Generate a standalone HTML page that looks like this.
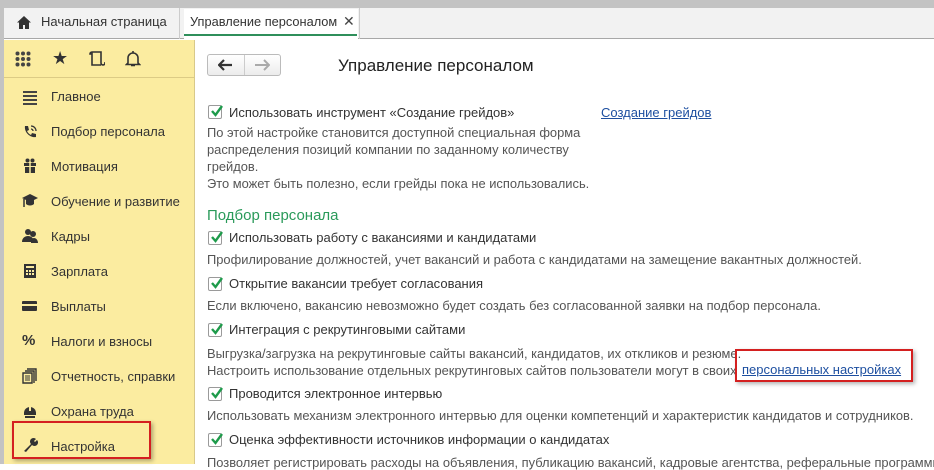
<!DOCTYPE html>
<html><head><meta charset="utf-8"><style>
*{margin:0;padding:0;box-sizing:border-box}
body{width:934px;height:464px;overflow:hidden;background:#fff;font-family:"Liberation Sans",Arial,sans-serif;font-size:13px;color:#333;position:relative}
.a{position:absolute;white-space:nowrap}
.top{left:0;top:0;width:934px;height:8px;background:#c3c3c3}
.tabs{left:0;top:8px;width:934px;height:31px;background:#f2f2f2;border-bottom:1px solid #a8a8a8}
.side{left:4px;top:40px;width:191px;height:424px;background:#fbeca0;border-right:1px solid #d8c98a}
.lb{left:0;top:8px;width:4px;height:456px;background:#c3c3c3}
.mi{left:51px;font-size:13px;color:#333}
.ic{left:22px;width:16px;height:16px}
.cb{width:14px;height:14px;border:1px solid #9a9a9a;background:#fff;border-radius:2px}
.cb svg{position:absolute;left:1px;top:-2px}
.t{left:229px;color:#333}
.d{left:207px;color:#555;font-size:12.9px}
</style></head><body>
<div class="a top"></div>
<div class="a tabs"></div>
<div class="a lb"></div>
<svg class="a" style="left:17px;top:16px" width="14" height="13" viewBox="0 0 14 13"><path d="M7 0L0 6.5h2V13h4V9h2v4h4V6.5h2z" fill="#333"/></svg>
<div class="a" style="left:41px;top:14px;color:#333">Начальная страница</div>
<div class="a" style="left:179px;top:8px;width:1px;height:31px;background:#ccc"></div>
<div class="a" style="left:184px;top:9px;width:174px;height:30px;background:#fff"></div>
<div class="a" style="left:190px;top:14px;color:#333;font-size:12.8px">Управление персоналом</div>
<div class="a" style="left:343px;top:13px;font-size:14px;color:#444">✕</div>
<div class="a" style="left:184px;top:34px;width:173px;height:2px;background:#2f8f5b"></div>
<div class="a" style="left:359px;top:8px;width:1px;height:31px;background:#ccc"></div>
<div class="a side"></div>
<svg class="a" style="left:15px;top:51px" width="16" height="16"><g fill="#444"><circle cx="2.5" cy="2.5" r="2"/><circle cx="8" cy="2.5" r="2"/><circle cx="13.5" cy="2.5" r="2"/><circle cx="2.5" cy="8" r="2"/><circle cx="8" cy="8" r="2"/><circle cx="13.5" cy="8" r="2"/><circle cx="2.5" cy="13.5" r="2"/><circle cx="8" cy="13.5" r="2"/><circle cx="13.5" cy="13.5" r="2"/></g></svg>
<div class="a" style="left:52px;top:48px;font-size:18px;color:#333">★</div>
<svg class="a" style="left:89px;top:50px" width="16" height="17"><path d="M3 2h9v11a2 2 0 0 0 4 0v-1M3 2a2 2 0 0 0-2 2h2M3 2v13h9" fill="none" stroke="#333" stroke-width="1.6"/></svg>
<svg class="a" style="left:125px;top:50px" width="16" height="17"><path d="M8 1v2M3 13V8a5 5 0 0 1 10 0v5l1.5 1.5h-13zM6 15.5h4" fill="none" stroke="#333" stroke-width="1.6"/></svg>
<div class="a" style="left:4px;top:77px;width:190px;height:1px;background:#dccb85"></div>
<svg class="a ic" style="top:90px"><path d="M1 2h14M1 6h14M1 10h14M1 14h14" stroke="#444" stroke-width="2"/></svg>
<div class="a mi" style="top:89px">Главное</div>
<svg class="a ic" style="top:124px"><path d="M3 2l3 0 1 4-2 1c1 2 2 3 4 4l1-2 4 1v3c-6 1-12-5-11-11z" fill="#333"/><path d="M9 2a5 5 0 0 1 5 5M9 5a2 2 0 0 1 2 2" stroke="#333" stroke-width="1.3" fill="none"/></svg>
<div class="a mi" style="top:124px">Подбор персонала</div>
<svg class="a ic" style="top:158px"><path d="M2 5h12v3H2zM3 9h10v6H3z" fill="#333"/><path d="M8 4V15" stroke="#fbeca0" stroke-width="1.5"/><circle cx="5.5" cy="2.5" r="2" fill="#333"/><circle cx="10.5" cy="2.5" r="2" fill="#333"/></svg>
<div class="a mi" style="top:159px">Мотивация</div>
<svg class="a ic" style="top:193px"><path d="M0 5l8-4 8 4-8 4z M4 7v4c2 2 6 2 8 0V7L8 9z" fill="#333"/><path d="M2 6v8" stroke="#333" stroke-width="1.5"/></svg>
<div class="a mi" style="top:194px">Обучение и развитие</div>
<svg class="a ic" style="top:228px"><circle cx="6" cy="4" r="3" fill="#333"/><circle cx="11" cy="6" r="3" fill="#333"/><path d="M0 14c0-4 3-6 6-6s6 2 6 6zM9 15c0-3 1-5 3-5s4 2 4 5z" fill="#333"/></svg>
<div class="a mi" style="top:229px">Кадры</div>
<svg class="a ic" style="top:263px"><rect x="2" y="1" width="12" height="14" fill="#333"/><rect x="4" y="3" width="8" height="2" fill="#fbeca0"/><g fill="#fbeca0"><rect x="4" y="7" width="2" height="2"/><rect x="7" y="7" width="2" height="2"/><rect x="10" y="7" width="2" height="2"/><rect x="4" y="10" width="2" height="2"/><rect x="7" y="10" width="2" height="2"/><rect x="10" y="10" width="2" height="2"/></g></svg>
<div class="a mi" style="top:264px">Зарплата</div>
<svg class="a ic" style="top:298px"><rect x="0" y="3" width="15" height="10" rx="1" fill="#333"/><rect x="0" y="6" width="15" height="2" fill="#fbeca0"/></svg>
<div class="a mi" style="top:299px">Выплаты</div>
<div class="a ic" style="top:332px;font-size:15px;font-weight:bold;color:#333">%</div>
<div class="a mi" style="top:334px">Налоги и взносы</div>
<svg class="a ic" style="top:368px"><path d="M5 1h9v12M3 3h9v12M1 5h9v10H1z" fill="none" stroke="#333" stroke-width="1.4"/><path d="M3 8h5M3 10h5M3 12h5" stroke="#333"/></svg>
<div class="a mi" style="top:369px">Отчетность, справки</div>
<svg class="a ic" style="top:403px"><path d="M2 10a6 6 0 0 1 12 0v2H2z" fill="#333"/><rect x="7" y="2" width="2" height="6" fill="#fbeca0"/><path d="M3 13h10v2H3z" fill="#333"/></svg>
<div class="a mi" style="top:404px">Охрана труда</div>
<svg class="a ic" style="top:437px"><path d="M2 14L9 7a3.5 3.5 0 0 1 5-5l-2 2 1 1 2-2a3.5 3.5 0 0 1-5 5L4 15z" fill="#333"/></svg>
<div class="a mi" style="top:439px">Настройка</div>
<div class="a" style="left:12px;top:421px;width:139px;height:38px;border:2px solid #d42020;box-shadow:2px 2px 4px rgba(0,0,0,.3)"></div>

<div class="a" style="left:207px;top:54px;width:74px;height:22px;border:1px solid #bbb;border-radius:3px;background:linear-gradient(#fff,#ececec)"></div>
<div class="a" style="left:244px;top:55px;width:1px;height:20px;background:#ccc"></div>
<svg class="a" style="left:218px;top:59px" width="16" height="12"><path d="M1 6h13M6 1L1 6l5 5" stroke="#333" stroke-width="2.2" fill="none"/></svg>
<svg class="a" style="left:254px;top:59px" width="16" height="12"><path d="M1 6h13M10 1l5 5-5 5" stroke="#aaa" stroke-width="2" fill="none"/></svg>
<div class="a" style="left:338px;top:56px;font-size:17px;color:#222">Управление персоналом</div>

<div class="a cb" style="left:208px;top:105px"><svg width="14" height="14"><path d="M2 7l3.5 4L12 2" stroke="#1e9b4b" stroke-width="2.4" fill="none"/></svg></div>
<div class="a t" style="top:105px">Использовать инструмент «Создание грейдов»</div>
<div class="a" style="left:601px;top:105px;color:#1d4fa0;text-decoration:underline">Создание грейдов</div>
<div class="a d" style="top:124px;line-height:17px">По этой настройке становится доступной специальная форма<br>распределения позиций компании по заданному количеству<br>грейдов.<br>Это может быть полезно, если грейды пока не использовались.</div>
<div class="a" style="left:207px;top:207px;font-size:15px;color:#2a9a5a">Подбор персонала</div>
<div class="a cb" style="left:208px;top:231px"><svg width="14" height="14"><path d="M2 7l3.5 4L12 2" stroke="#1e9b4b" stroke-width="2.4" fill="none"/></svg></div>
<div class="a t" style="top:230px">Использовать работу с вакансиями и кандидатами</div>
<div class="a d" style="top:252px">Профилирование должностей, учет вакансий и работа с кандидатами на замещение вакантных должностей.</div>
<div class="a cb" style="left:208px;top:277px"><svg width="14" height="14"><path d="M2 7l3.5 4L12 2" stroke="#1e9b4b" stroke-width="2.4" fill="none"/></svg></div>
<div class="a t" style="top:276px">Открытие вакансии требует согласования</div>
<div class="a d" style="top:298px">Если включено, вакансию невозможно будет создать без согласованной заявки на подбор персонала.</div>
<div class="a cb" style="left:208px;top:323px"><svg width="14" height="14"><path d="M2 7l3.5 4L12 2" stroke="#1e9b4b" stroke-width="2.4" fill="none"/></svg></div>
<div class="a t" style="top:322px">Интеграция с рекрутинговыми сайтами</div>
<div class="a d" style="top:345px;line-height:17px">Выгрузка/загрузка на рекрутинговые сайты вакансий, кандидатов, их откликов и резюме.<br>Настроить использование отдельных рекрутинговых сайтов пользователи могут в своих</div>
<div class="a" style="left:742px;top:362px;color:#1d4fa0;text-decoration:underline">персональных настройках</div>
<div class="a" style="left:735px;top:349px;width:178px;height:33px;border:2px solid #d42020;box-shadow:2px 2px 4px rgba(0,0,0,.3)"></div>
<div class="a cb" style="left:208px;top:387px"><svg width="14" height="14"><path d="M2 7l3.5 4L12 2" stroke="#1e9b4b" stroke-width="2.4" fill="none"/></svg></div>
<div class="a t" style="top:386px">Проводится электронное интервью</div>
<div class="a d" style="top:408px">Использовать механизм электронного интервью для оценки компетенций и характеристик кандидатов и сотрудников.</div>
<div class="a cb" style="left:208px;top:433px"><svg width="14" height="14"><path d="M2 7l3.5 4L12 2" stroke="#1e9b4b" stroke-width="2.4" fill="none"/></svg></div>
<div class="a t" style="top:432px">Оценка эффективности источников информации о кандидатах</div>
<div class="a d" style="top:455px">Позволяет регистрировать расходы на объявления, публикацию вакансий, кадровые агентства, реферальные программы</div>
</body></html>
